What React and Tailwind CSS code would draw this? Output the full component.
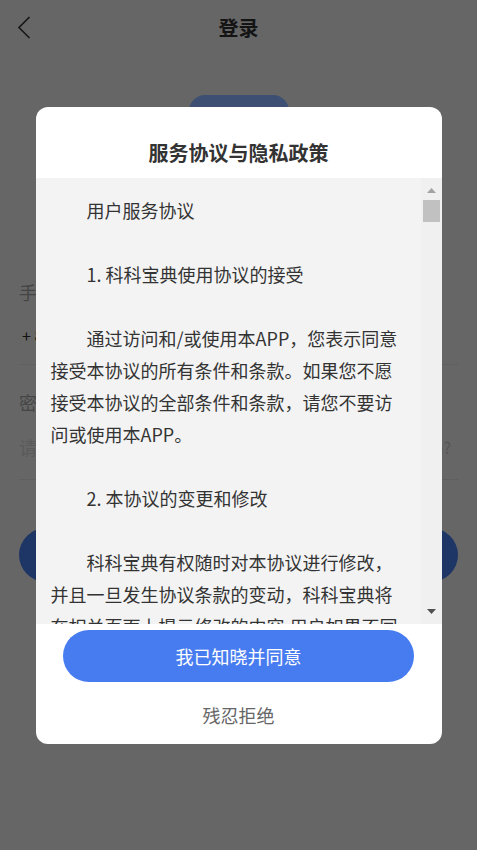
import React from "react";

const FONT = { fontFamily: '"Noto Sans CJK SC", "Noto Sans", sans-serif' };

function Blank() {
  return <div className="h-[32px]" />;
}

export default function App() {
  return (
    <div className="relative h-[850px] w-full overflow-hidden bg-[#666666]" style={FONT}>
      {/* dimmed login page behind */}
      <div className="grid h-[55px] grid-cols-[1fr_auto_1fr] items-center">
        <div className="pl-[17px]">
          <svg width="14" height="23" viewBox="0 0 14 23" fill="none">
            <polyline points="12.5,1 2,11.5 12.5,22" stroke="#161616" strokeWidth="1.6" />
          </svg>
        </div>
        <div className="text-[20px] font-bold leading-[24px] text-[#141414]">登录</div>
        <div />
      </div>
      <div className="mx-auto mt-[40px] h-[44px] w-[100px] rounded-[16px] bg-[#3d5073]" />
      <div className="mt-[141px] px-[19px]">
        <div className="h-[24px] text-[18px] leading-[24px] text-[#454545]">手机号</div>
        <div className="ml-[3px] mt-[19px] h-[24px] text-[16px] leading-[24px] text-[#111111]">+ 86</div>
        <div className="mt-[17px] border-t border-[#5f5f5f]" />
        <div className="mt-[25px] h-[24px] text-[18px] leading-[24px] text-[#454545]">密码</div>
        <div className="mt-[21px] flex h-[24px] items-center justify-between text-[18px] leading-[24px]">
          <span className="text-[#5a5a5a]">请输入密码</span>
          <span className="mr-[7px] text-[16px] text-[#555555]">忘记密码?</span>
        </div>
        <div className="mt-[20px] border-t border-[#5f5f5f]" />
        <div className="mt-[48px] h-[54px] w-full rounded-full bg-[#1e3666]" />
      </div>

      {/* modal */}
      <div className="absolute inset-0 flex items-center justify-center pt-[1px]">
        <div className="flex w-[406px] flex-col overflow-hidden rounded-[12px] bg-white">
          <div className="pb-[13px] pt-[34px] text-center text-[20px] font-bold leading-[24px] text-[#333333]">
            服务协议与隐私政策
          </div>
          <div className="flex h-[446px] bg-[#f3f3f3]">
            <div className="flex-1 overflow-hidden pl-[15px] pr-[15px] pt-[16px] text-[18px] leading-[32px] text-[#333333]">
              <p className="indent-[2em]">用户服务协议</p>
              <Blank />
              <p className="indent-[2em]">1. 科科宝典使用协议的接受</p>
              <Blank />
              <p className="indent-[2em]">
                通过访问和/或使用本APP，您表示同意接受本协议的所有条件和条款。如果您不愿接受本协议的全部条件和条款，请您不要访问或使用本APP。
              </p>
              <Blank />
              <p className="indent-[2em]">2. 本协议的变更和修改</p>
              <Blank />
              <p className="indent-[2em]">
                科科宝典有权随时对本协议进行修改，并且一旦发生协议条款的变动，科科宝典将在相关页面上提示修改的内容;用户如果不同意修改后的协议内容，可以主动停止使用本APP。
              </p>
            </div>
            <div className="flex w-[21px] flex-col items-center bg-[#f0f0f0]">
              <svg className="mt-[10px]" width="9" height="5" viewBox="0 0 9 5">
                <polygon points="0,5 9,5 4.5,0" fill="#a3a3a3" />
              </svg>
              <div className="mt-[7px] h-[22px] w-[17px] bg-[#c1c1c1]" />
              <svg className="mb-[10px] mt-auto" width="9" height="5" viewBox="0 0 9 5">
                <polygon points="0,0 9,0 4.5,5" fill="#505050" />
              </svg>
            </div>
          </div>
          <button className="mx-auto mt-[6px] h-[52px] w-[351px] rounded-full bg-[#477cf0] text-[18px] text-white">
            我已知晓并同意
          </button>
          <div className="mb-[13px] mt-[17px] text-center text-[18px] leading-[32px] text-[#666666]">
            残忍拒绝
          </div>
        </div>
      </div>
    </div>
  );
}
